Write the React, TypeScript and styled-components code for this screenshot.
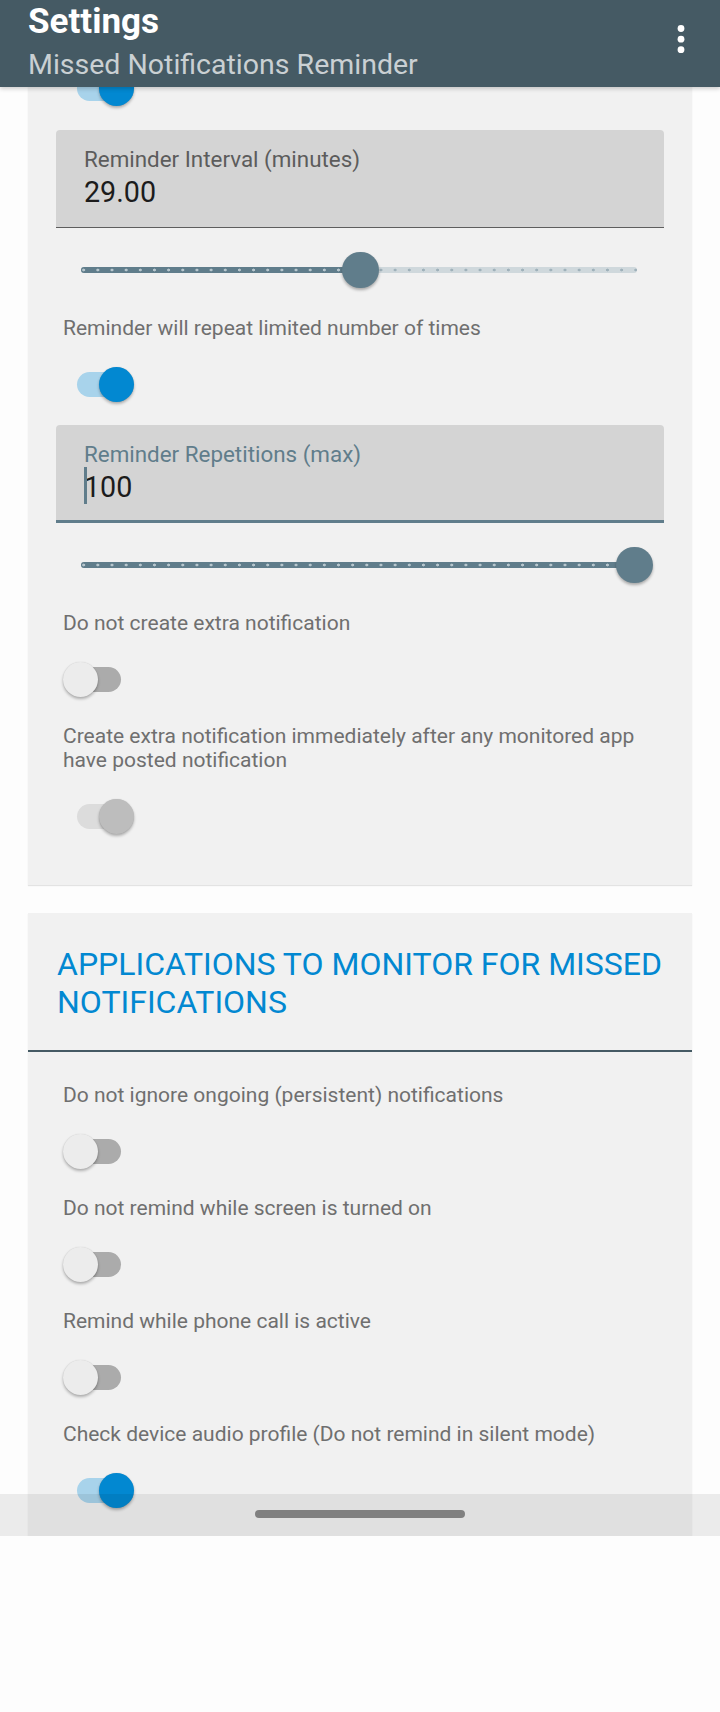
import React from "react";
import styled, { createGlobalStyle } from "styled-components";

const GlobalStyle = createGlobalStyle`
  html, body { margin: 0; padding: 0; background: #fdfdfd; }
  body { font-family: Roboto, "Noto Sans", "DejaVu Sans", sans-serif; }
  * { box-sizing: border-box; }
`;

const Page = styled.div`
  width: 720px;
  height: 1712px;
  background: #fdfdfd;
`;

const Screen = styled.div`
  position: relative;
  width: 720px;
  height: 1536px;
  overflow: hidden;
  display: flex;
  flex-direction: column;
  background: #fdfdfd;
`;

const AppBar = styled.header`
  position: relative;
  z-index: 2;
  flex: 0 0 87px;
  height: 87px;
  background: #455a64;
  display: flex;
  justify-content: space-between;
  align-items: flex-start;
  padding: 1px 0 0 28px;
  box-shadow: 0 2px 4px rgba(0, 0, 0, 0.18);
`;

const Titles = styled.div`
  display: flex;
  flex-direction: column;
`;

const Title = styled.div`
  font-family: Roboto, sans-serif;
  font-weight: 700;
  font-size: 35px;
  line-height: 41px;
  color: #ffffff;
`;

const Subtitle = styled.div`
  margin-top: 6px;
  font-family: Roboto, sans-serif;
  font-size: 28.5px;
  line-height: 33px;
  color: rgba(255, 255, 255, 0.72);
`;

const MenuButton = styled.div`
  margin: 24px 35px 0 0;
  width: 8px;
  height: 30px;
  display: flex;
`;

const Viewport = styled.main`
  flex: 1 1 auto;
  overflow: hidden;
`;

const ScrollContent = styled.div`
  margin-top: -23px;
  display: flex;
  flex-direction: column;
`;

const Card = styled.section<{ $gap?: number }>`
  margin: ${(p) => p.$gap ?? 0}px 28px 0;
  background: #f1f1f1;
  display: flex;
  flex-direction: column;
  box-shadow: 0 1px 1px rgba(0, 0, 0, 0.1);
`;

const CardBody = styled.div<{ $pt?: number; $pb?: number }>`
  display: flex;
  flex-direction: column;
  padding: ${(p) => p.$pt ?? 0}px 28px ${(p) => p.$pb ?? 0}px;
`;

const SectionHeader = styled.h2`
  margin: 0;
  padding: 33px 12px 29px 29px;
  font-family: Roboto, sans-serif;
  font-weight: 400;
  font-size: 32px;
  line-height: 37.5px;
  color: #0288d1;
  border-bottom: 2px solid #455a64;
`;

const PrefText = styled.div<{ $mt?: number }>`
  margin: ${(p) => p.$mt ?? 0}px 0 0 7px;
  font-family: Roboto, sans-serif;
  font-size: 21px;
  line-height: 24px;
  color: #6f6f6f;
`;

/* ---------- switch ---------- */
const SwitchBox = styled.div<{ $mt?: number }>`
  position: relative;
  margin: ${(p) => p.$mt ?? 0}px 0 0 7px;
  width: 71px;
  height: 48px;
  display: flex;
  align-items: center;
  flex: 0 0 auto;
`;

const SwitchTrack = styled.div<{ $color: string }>`
  margin-left: 14px;
  width: 44px;
  height: 25px;
  border-radius: 12.5px;
  background: ${(p) => p.$color};
`;

const SwitchThumb = styled.div<{ $on: boolean; $color: string }>`
  position: absolute;
  top: 6.5px;
  left: ${(p) => (p.$on ? 36 : 0)}px;
  width: 35px;
  height: 35px;
  border-radius: 50%;
  background: ${(p) => p.$color};
  box-shadow: 0 2px 3px rgba(0, 0, 0, 0.28), 0 0 1px rgba(0, 0, 0, 0.15);
`;

type SwitchKind = "on" | "off" | "disabledOn";
const switchColors: Record<SwitchKind, { track: string; thumb: string }> = {
  on: { track: "#a8d3eb", thumb: "#0288d1" },
  off: { track: "#ababab", thumb: "#ececec" },
  disabledOn: { track: "#dcdcdc", thumb: "#bdbdbd" },
};

const Switch: React.FC<{ kind: SwitchKind; mt?: number }> = ({ kind, mt }) => {
  const c = switchColors[kind];
  return (
    <SwitchBox $mt={mt}>
      <SwitchTrack $color={c.track} />
      <SwitchThumb $on={kind !== "off"} $color={c.thumb} />
    </SwitchBox>
  );
};

/* ---------- text field ---------- */
const Field = styled.div<{ $focused: boolean; $mt?: number }>`
  margin-top: ${(p) => p.$mt ?? 0}px;
  height: 98px;
  background: #d4d4d4;
  border-radius: 4px 4px 0 0;
  border-bottom: ${(p) => (p.$focused ? "3.5px solid #607d8b" : "1.7px solid #5e5e5e")};
  padding: 16px 28px 0;
  display: flex;
  flex-direction: column;
`;

const FieldLabel = styled.div<{ $focused: boolean }>`
  font-family: Roboto, sans-serif;
  font-size: 22.4px;
  line-height: 26px;
  color: ${(p) => (p.$focused ? "#607d8b" : "#5c5c5c")};
`;

const FieldValue = styled.div`
  position: relative;
  margin-top: 3px;
  font-family: Roboto, sans-serif;
  font-size: 28.7px;
  line-height: 34px;
  color: #1c1c1c;
`;

const Caret = styled.span`
  position: absolute;
  left: 0;
  top: -3px;
  width: 3px;
  height: 37px;
  background: #607d8b;
`;

/* ---------- slider ---------- */
const SliderRow = styled.div<{ $mt?: number }>`
  margin: ${(p) => p.$mt ?? 0}px 27px 0 25px;
  height: 48px;
  display: flex;
  align-items: center;
`;

const tickPattern = (color: string) =>
  `radial-gradient(circle at center, ${color} 0 1.2px, transparent 1.7px)`;

const SliderTrack = styled.div`
  position: relative;
  width: 100%;
  height: 6px;
  border-radius: 3px;
  background-color: #cfd8dc;
  background-image: ${tickPattern("#9fb1ba")};
  background-size: 14.17px 6px;
  background-position: -4.4px 0;
  background-repeat: repeat-x;
`;

const SliderFill = styled.div`
  position: absolute;
  left: 0;
  top: 0;
  bottom: 0;
  border-radius: 3px;
  background-color: #607d8b;
  background-image: ${tickPattern("#b8c7ce")};
  background-size: 14.17px 6px;
  background-position: -4.4px 0;
  background-repeat: repeat-x;
`;

const SliderThumb = styled.div`
  position: absolute;
  top: -15.3px;
  width: 36.6px;
  height: 36.6px;
  margin-left: -18.3px;
  border-radius: 50%;
  background: #607d8b;
  box-shadow: 0 2px 3px rgba(0, 0, 0, 0.3);
`;

const Slider: React.FC<{ value: number; mt?: number }> = ({ value, mt }) => (
  <SliderRow $mt={mt}>
    <SliderTrack>
      <SliderFill style={{ width: `${value * 100}%` }} />
      <SliderThumb style={{ left: `${value * 100}%` }} />
    </SliderTrack>
  </SliderRow>
);

/* ---------- nav bar ---------- */
const NavBar = styled.div`
  position: absolute;
  left: 0;
  right: 0;
  bottom: 0;
  height: 42px;
  z-index: 3;
  background: rgba(0, 0, 0, 0.07);
  display: flex;
  justify-content: center;
  padding-top: 16px;
`;

const NavHandle = styled.div`
  width: 210px;
  height: 8px;
  border-radius: 4px;
  background: #808080;
`;

const Pref: React.FC<{ text: React.ReactNode; kind: SwitchKind; mt?: number }> = ({
  text,
  kind,
  mt,
}) => (
  <>
    <PrefText $mt={mt}>{text}</PrefText>
    <Switch kind={kind} mt={20} />
  </>
);

export default function App() {
  return (
    <Page>
      <GlobalStyle />
      <Screen>
        <AppBar>
          <Titles>
            <Title>Settings</Title>
            <Subtitle>Missed Notifications Reminder</Subtitle>
          </Titles>
          <MenuButton>
            <svg width="8" height="30" viewBox="0 0 8 30">
              <circle cx="4" cy="3.5" r="3.4" fill="#fff" />
              <circle cx="4" cy="14.2" r="3.4" fill="#fff" />
              <circle cx="4" cy="24.7" r="3.4" fill="#fff" />
            </svg>
          </MenuButton>
        </AppBar>
        <Viewport>
          <ScrollContent>
            <Card>
              <CardBody $pb={45}>
                <Switch kind="on" />
                <Field $focused={false} $mt={18}>
                  <FieldLabel $focused={false}>Reminder Interval (minutes)</FieldLabel>
                  <FieldValue>29.00</FieldValue>
                </Field>
                <Slider value={0.503} mt={18} />
                <Pref text="Reminder will repeat limited number of times" kind="on" mt={22} />
                <Field $focused={true} $mt={17}>
                  <FieldLabel $focused={true}>Reminder Repetitions (max)</FieldLabel>
                  <FieldValue>
                    <Caret />
                    100
                  </FieldValue>
                </Field>
                <Slider value={0.995} mt={18} />
                <Pref text="Do not create extra notification" kind="off" mt={22} />
                <Pref
                  text="Create extra notification immediately after any monitored app have posted notification"
                  kind="disabledOn"
                  mt={21}
                />
              </CardBody>
            </Card>
            <Card $gap={28}>
              <SectionHeader>APPLICATIONS TO MONITOR FOR MISSED NOTIFICATIONS</SectionHeader>
              <CardBody $pt={31} $pb={60}>
                <Pref text="Do not ignore ongoing (persistent) notifications" kind="off" />
                <Pref text="Do not remind while screen is turned on" kind="off" mt={21} />
                <Pref text="Remind while phone call is active" kind="off" mt={21} />
                <Pref
                  text="Check device audio profile (Do not remind in silent mode)"
                  kind="on"
                  mt={21}
                />
              </CardBody>
            </Card>
          </ScrollContent>
        </Viewport>
        <NavBar>
          <NavHandle />
        </NavBar>
      </Screen>
    </Page>
  );
}
